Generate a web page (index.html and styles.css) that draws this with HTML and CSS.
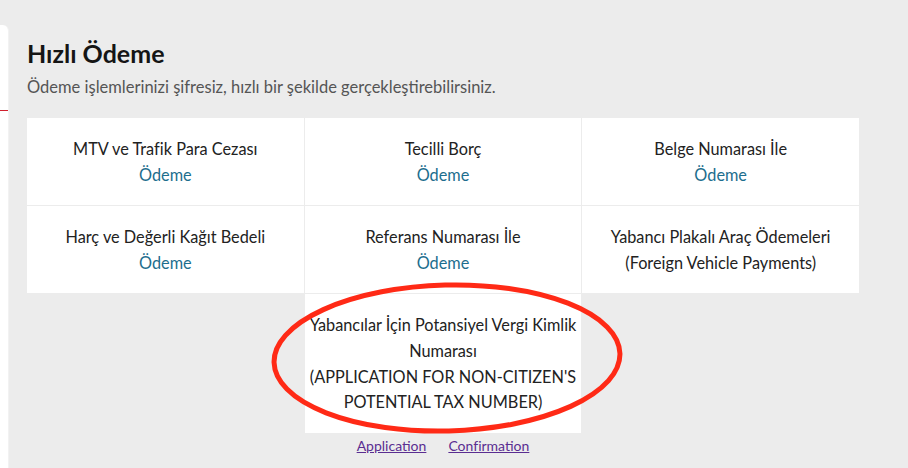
FILE: index.html
```html
<!DOCTYPE html>
<html lang="tr">
<head>
<meta charset="utf-8">
<title>Hızlı Ödeme</title>
<link rel="stylesheet" href="styles.css">
</head>
<body>
<div class="page">
  <aside class="sidebar"><div class="sidebar-mark"></div></aside>
  <main class="main">
    <h1 class="title">Hızlı Ödeme</h1>
    <p class="subtitle">Ödeme işlemlerinizi şifresiz, hızlı bir şekilde gerçekleştirebilirsiniz.</p>
    <div class="grid">
      <div class="cell"><span class="label">MTV ve Trafik Para Cezası</span><a class="pay" href="#">Ödeme</a></div>
      <div class="cell"><span class="label">Tecilli Borç</span><a class="pay" href="#">Ödeme</a></div>
      <div class="cell"><span class="label">Belge Numarası İle</span><a class="pay" href="#">Ödeme</a></div>
      <div class="cell"><span class="label">Harç ve Değerli Kağıt Bedeli</span><a class="pay" href="#">Ödeme</a></div>
      <div class="cell"><span class="label">Referans Numarası İle</span><a class="pay" href="#">Ödeme</a></div>
      <div class="cell"><span class="label">Yabancı Plakalı Araç Ödemeleri</span><span class="label">(Foreign Vehicle Payments)</span></div>
      <div class="cell cell-center"><span class="label">Yabancılar İçin Potansiyel Vergi Kimlik Numarası</span><span class="label">(APPLICATION FOR NON-CITIZEN'S POTENTIAL TAX NUMBER)</span>
        <svg class="circle" viewBox="0 0 360 160" width="360" height="160" aria-hidden="true">
          <ellipse cx="180" cy="80" rx="173" ry="73" fill="none" stroke="#ff2a16" stroke-width="5" transform="rotate(-1.5 180 80)"/>
        </svg>
      </div>
    </div>
    <div class="links">
      <a class="sublink" href="#">Application</a>
      <a class="sublink" href="#">Confirmation</a>
    </div>
  </main>
</div>
</body>
</html>
```
FILE: styles.css
```css
html, body {
  margin: 0;
  padding: 0;
  height: 100%;
  background: #ececec;
  font-family: "Lato", "Open Sans", sans-serif;
}
.page {
  display: flex;
  min-height: 100%;
}
.sidebar {
  width: 8px;
  margin-top: 25px;
  background: #ffffff;
  border-top-right-radius: 6px;
  border-right: 1px solid #f2f2f2;
  flex-shrink: 0;
}
.sidebar-mark {
  margin-top: 85px;
  height: 1px;
  background: #d0202e;
}
.main {
  flex: 1;
  padding: 37px 48px 0 18px;
}
.title {
  margin: 0;
  font-size: 25px;
  font-weight: 700;
  color: #151515;
  line-height: 32px;
}
.subtitle {
  margin: 7px 0 0;
  font-size: 16.5px;
  color: #555555;
  line-height: 22px;
}
.grid {
  margin-top: 20px;
  display: grid;
  grid-template-columns: repeat(3, 1fr);
  gap: 1px;
  width: 832px;
}
.cell {
  background: #ffffff;
  padding: 18px 0;
  display: flex;
  flex-direction: column;
  align-items: center;
  text-align: center;
  font-size: 16.3px;
  line-height: 25.6px;
  color: #222222;
}
.cell-center {
  grid-column: 2;
  position: relative;
}
.pay {
  color: #1d6e8e;
  text-decoration: none;
}
.circle {
  position: absolute;
  left: -38px;
  top: -16px;
  pointer-events: none;
}
.links {
  width: 832px;
  display: flex;
  justify-content: center;
  gap: 22px;
  margin-top: 2px;
  font-size: 14px;
  line-height: 22px;
}
.sublink {
  color: #5a2d91;
  text-decoration: underline;
}
```
